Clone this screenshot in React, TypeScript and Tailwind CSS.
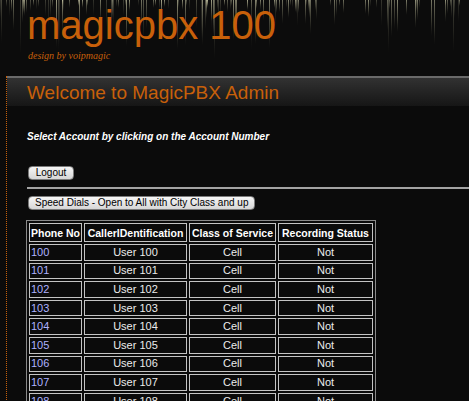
const rows = Array.from({ length: 9 }, (_, i) => ({
  phone: String(100 + i),
  caller: `User ${100 + i}`,
  cls: "Cell",
  rec: "Not",
}));

// deterministic streaks for the header background
const streaks = (() => {
  let seed = 7;
  const rnd = () => {
    seed = (seed * 9301 + 49297) % 233280;
    return seed / 233280;
  };
  return Array.from({ length: 150 }, (_, i) => ({
    id: i,
    x: Math.floor(rnd() * 469),
    h: 6 + Math.floor(rnd() * rnd() * 62),
    o: 0.2 + rnd() * 0.55,
  }));
})();

const HeaderStreaks = () => (
  <svg
    className="absolute inset-0"
    width="100%"
    height="76"
    viewBox="0 0 469 76"
    preserveAspectRatio="none"
  >
    <defs>
      <linearGradient id="streak" x1="0" y1="0" x2="0" y2="1">
        <stop offset="0" stopColor="#d9d8b4" stopOpacity="0.9" />
        <stop offset="0.6" stopColor="#a6a484" stopOpacity="0.45" />
        <stop offset="1" stopColor="#6b6a55" stopOpacity="0" />
      </linearGradient>
    </defs>
    {streaks.map((s) => (
      <rect
        key={s.id}
        x={s.x}
        y={0}
        width={1}
        height={s.h}
        fill="url(#streak)"
        opacity={s.o}
      />
    ))}
  </svg>
);

const btn =
  "mt-[7px] ml-[1px] block h-[14px] rounded-[4px] border border-[#7a7a7a] bg-gradient-to-b from-[#f6f6f6] to-[#d6d6d6] text-[10px] leading-[12px] text-black";

const App = () => {
  return (
    <div className="min-h-screen bg-[#0b0b0b] font-['Liberation_Sans',Arial,sans-serif] overflow-hidden">
      <div className="relative h-[76px] bg-[#0c0c0c]">
        <HeaderStreaks />
        <div className="relative pl-[27px] pt-[5px]">
          <h1 className="text-[40px] leading-[40px] text-[#c8600a]">magicpbx 100</h1>
          <p className="mt-[5px] pl-[1px] text-[10px] leading-[12px] italic text-[#c8600a] font-['Liberation_Serif',serif]">
            design by voipmagic
          </p>
        </div>
      </div>

      <div className="ml-[6px] border-l border-dotted border-[#c8600a]">
        <div className="border-t-2 border-[#6a6a6a] h-[30px] bg-gradient-to-b from-[#323232] to-[#161616] pl-[20px] pt-[4px]">
          <h2 className="text-[19px] leading-[22px] text-[#c8600a]">Welcome to MagicPBX Admin</h2>
        </div>

        <div className="pl-[20px]">
          <p className="pt-[25px] text-[10px] leading-[12px] font-bold italic text-white">
            Select Account by clicking on the Account Number
          </p>

          <button className={`${btn} mt-[23px] w-[46px]`}>Logout</button>

          <div className="mt-[7px] h-[2px] bg-[#a3a3a3]" />

          <button className={`${btn} px-[6px]`}>
            Speed Dials - Open to All with City Class and up
          </button>

          <table className="mt-[10px] -ml-[1px] border border-[#8a8a8a] border-separate border-spacing-[2px] text-[11px]">
            <thead>
              <tr>
                {[
                  ["Phone No", "w-[53px] text-left"],
                  ["CallerIDentification", "w-[103px]"],
                  ["Class of Service", "w-[87px]"],
                  ["Recording Status", "w-[95px]"],
                ].map(([t, c]) => (
                  <th
                    key={t}
                    className={`${c} h-[19px] border border-[#c4c4c4] px-[1px] text-[10.5px] font-bold text-white leading-[14px] whitespace-nowrap`}
                  >
                    {t}
                  </th>
                ))}
              </tr>
            </thead>
            <tbody>
              {rows.map((r) => (
                <tr key={r.phone}>
                  <td className="h-[16.6px] border border-[#c4c4c4] px-[1px] leading-[13px] text-[#aeb2ff]">
                    {r.phone}
                  </td>
                  <td className="h-[16.6px] border border-[#c4c4c4] text-center leading-[13px] text-[#ececec]">
                    {r.caller}
                  </td>
                  <td className="h-[16.6px] border border-[#c4c4c4] text-center leading-[13px] text-[#ececec]">
                    {r.cls}
                  </td>
                  <td className="h-[16.6px] border border-[#c4c4c4] text-center leading-[13px] text-[#ececec]">
                    {r.rec}
                  </td>
                </tr>
              ))}
            </tbody>
          </table>
        </div>
      </div>
    </div>
  );
};

export default App;
